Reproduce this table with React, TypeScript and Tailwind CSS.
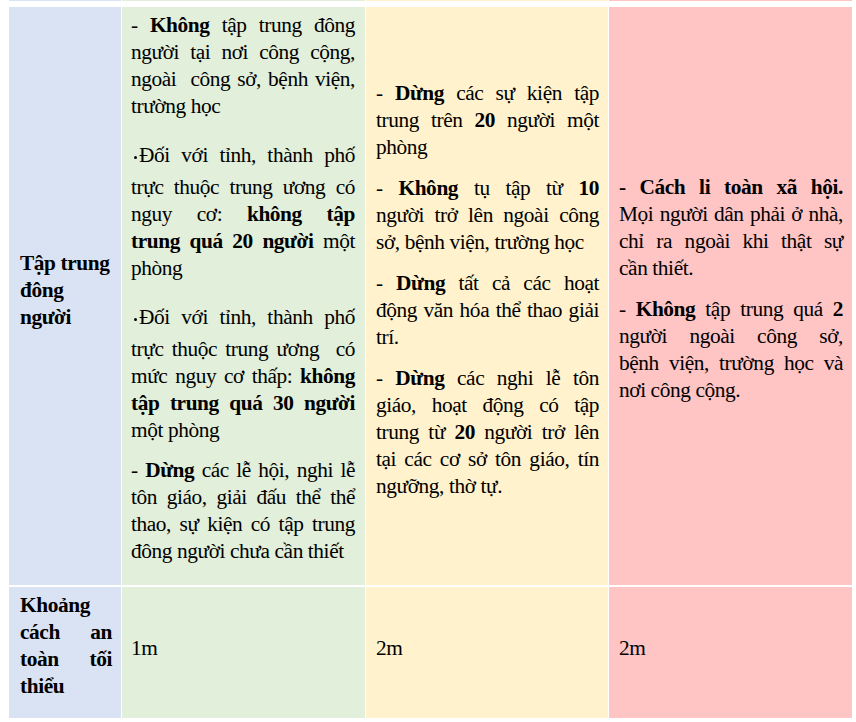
import type { ReactNode } from 'react'

const COLS = 'grid grid-cols-[112px_243px_242px_243px] gap-x-[1px]'

function J({ children }: { children: ReactNode }) {
  return <div className="text-justify [text-align-last:justify]">{children}</div>
}

function Last({ children }: { children: ReactNode }) {
  return <div className="whitespace-nowrap text-left">{children}</div>
}

function Dot() {
  return <span className="mr-[2px] ml-[3px] inline-block h-[3px] w-[3px] rounded-full bg-black align-middle" />
}

export default function App() {
  return (
    <div className="h-[722px] w-[856px] bg-white pl-[9px] font-['Liberation_Serif','Times_New_Roman','DejaVu_Serif',serif] text-[21.33px] leading-[27px] tracking-[-0.4px] text-black">
      {/* sliver of the row above */}
      <div className={`${COLS} h-[1px]`}>
        <div className="bg-[#dae3f3]" />
        <div className="bg-[#e2efda]" />
        <div className="bg-[#fff2cc]" />
        <div className="bg-[#ffc4c4]" />
      </div>

      <div className={`${COLS} mt-[6px] h-[578px]`}>
        <div className="flex flex-col justify-center bg-[#dae3f3] pb-[12px] pl-[11px] pr-[9px] font-bold">
          <Last>Tập trung</Last>
          <Last>đông</Last>
          <Last>người</Last>
        </div>

        <div className="flex flex-col gap-[13px] bg-[#e2efda] pl-[9px] pr-[10px] pt-[5px]">
          <div>
            <J>
              - <b>Không</b> tập trung đông
            </J>
            <J>người tại nơi công cộng,</J>
            <J>ngoài&nbsp; công sở, bệnh viện,</J>
            <Last>trường học</Last>
          </div>
          <div>
            <div className="pb-[5px] pt-[9px]">
              <J>
                <Dot />
                Đối với tỉnh, thành phố
              </J>
            </div>
            <J>trực thuộc trung ương có</J>
            <J>
              nguy cơ: <b>không tập</b>
            </J>
            <J>
              <b>trung quá 20 người</b> một
            </J>
            <Last>phòng</Last>
          </div>
          <div>
            <div className="pb-[5px] pt-[9px]">
              <J>
                <Dot />
                Đối với tỉnh, thành phố
              </J>
            </div>
            <J>trực thuộc trung ương&nbsp; có</J>
            <J>
              mức nguy cơ thấp: <b>không</b>
            </J>
            <J>
              <b>tập trung quá 30 người</b>
            </J>
            <Last>một phòng</Last>
          </div>
          <div>
            <J>
              - <b>Dừng</b> các lễ hội, nghi lễ
            </J>
            <J>tôn giáo, giải đấu thể thể</J>
            <J>thao, sự kiện có tập trung</J>
            <Last>đông người chưa cần thiết</Last>
          </div>
        </div>

        <div className="flex flex-col justify-center gap-[14px] bg-[#fff2cc] pb-[12px] pl-[10px] pr-[9px]">
          <div>
            <J>
              - <b>Dừng</b> các sự kiện tập
            </J>
            <J>
              trung trên <b>20</b> người một
            </J>
            <Last>phòng</Last>
          </div>
          <div>
            <J>
              - <b>Không</b> tụ tập từ <b>10</b>
            </J>
            <J>người trở lên ngoài công</J>
            <Last>sở, bệnh viện, trường học</Last>
          </div>
          <div>
            <J>
              - <b>Dừng</b> tất cả các hoạt
            </J>
            <J>động văn hóa thể thao giải</J>
            <Last>trí.</Last>
          </div>
          <div>
            <J>
              - <b>Dừng</b> các nghi lễ tôn
            </J>
            <J>giáo, hoạt động có tập</J>
            <J>
              trung từ <b>20</b> người trở lên
            </J>
            <J>tại các cơ sở tôn giáo, tín</J>
            <Last>ngưỡng, thờ tự.</Last>
          </div>
        </div>

        <div className="flex flex-col justify-center gap-[14px] bg-[#ffc4c4] pb-[14px] pl-[10px] pr-[9px]">
          <div>
            <J>
              <b>- Cách li toàn xã hội.</b>
            </J>
            <J>Mọi người dân phải ở nhà,</J>
            <J>chỉ ra ngoài khi thật sự</J>
            <Last>cần thiết.</Last>
          </div>
          <div>
            <J>
              - <b>Không</b> tập trung quá <b>2</b>
            </J>
            <J>người ngoài công sở,</J>
            <J>bệnh viện, trường học và</J>
            <Last>nơi công cộng.</Last>
          </div>
        </div>
      </div>

      <div className={`${COLS} mt-[2px] h-[131px]`}>
        <div className="flex flex-col justify-center bg-[#dae3f3] pb-[13px] pl-[11px] pr-[9px] font-bold">
          <Last>Khoảng</Last>
          <J>cách an</J>
          <J>toàn tối</J>
          <Last>thiểu</Last>
        </div>
        <div className="flex flex-col justify-center bg-[#e2efda] pb-[9px] pl-[9px] pr-[10px]">1m</div>
        <div className="flex flex-col justify-center bg-[#fff2cc] pb-[9px] pl-[10px] pr-[9px]">2m</div>
        <div className="flex flex-col justify-center bg-[#ffc4c4] pb-[9px] pl-[10px] pr-[9px]">2m</div>
      </div>
    </div>
  )
}
